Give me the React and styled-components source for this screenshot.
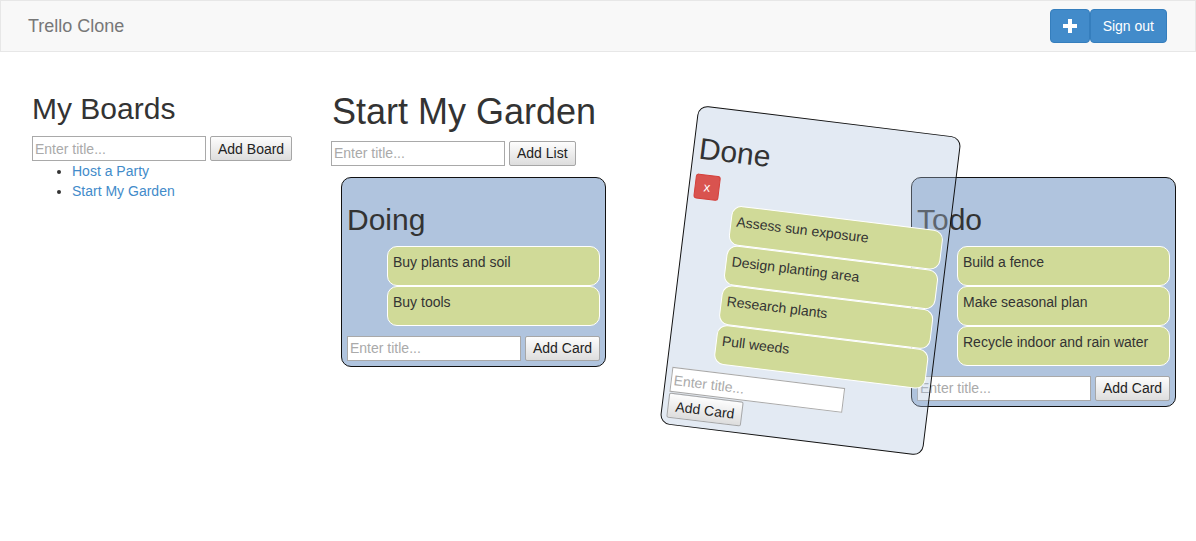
import React from "react";
import styled, { createGlobalStyle } from "styled-components";

/* ================= GLOBAL ================= */

const GlobalStyle = createGlobalStyle`
  body {
    margin: 0;
    background: #fff;
    color: #333;
    font-family: "Liberation Sans", Arial, Helvetica, sans-serif;
    font-size: 14px;
    line-height: 1.42857;
  }
  #root { min-height: 100vh; }
  * { box-sizing: border-box; }
`;

/* ================= NAVBAR ================= */

const Navbar = styled.nav`
  height: 52px;
  display: flex;
  align-items: center;
  justify-content: space-between;
  padding: 0 28px 0 27px;
  background: #f8f8f8;
  border: 1px solid #e7e7e7;
`;

const Brand = styled.a`
  font-size: 18px;
  line-height: 20px;
  color: #777;
  text-decoration: none;
`;

const NavActions = styled.div`
  display: flex;
`;

const PrimaryBtn = styled.button`
  height: 34px;
  display: flex;
  align-items: center;
  justify-content: center;
  padding: 0 12px;
  background: #428bca;
  border: 1px solid #357ebd;
  border-radius: 4px;
  color: #fff;
  font-family: inherit;
  font-size: 14px;
  cursor: pointer;
`;

/* ================= LAYOUT ================= */

const Main = styled.div`
  display: flex;
  padding: 18px 0 0 32px;
`;

const Sidebar = styled.aside`
  width: 300px;
  flex-shrink: 0;
`;

const BoardArea = styled.section`
  flex: 1;
`;

const Heading = styled.h2`
  margin: 22px 0 0;
  font-size: ${({ $big }) => ($big ? "36px" : "30px")};
  font-weight: 500;
  line-height: 1.1;
  color: #333;
`;

/* ================= FORMS ================= */

const InlineForm = styled.form`
  display: flex;
  flex-direction: ${({ $stacked }) => ($stacked ? "column" : "row")};
  align-items: flex-start;
  gap: ${({ $stacked }) => ($stacked ? "1px" : "4px")};
  margin: ${({ $top }) => $top || "0"} 0 0 ${({ $left }) => $left || "0"};
`;

const TitleInput = styled.input`
  width: 174px;
  height: 25px;
  padding: 0 2px;
  border: 1px solid #a9a9a9;
  background: #fff;
  font-family: inherit;
  font-size: 14px;
  color: #333;

  &::placeholder {
    color: #aaa;
  }
`;

const PlainBtn = styled.button`
  height: 25px;
  padding: 0 7px;
  border: 1px solid #a6a6a6;
  border-radius: 2px;
  background: linear-gradient(#fdfdfd, #dddddd);
  font-family: inherit;
  font-size: 14px;
  color: #222;
  white-space: nowrap;
`;

/* ================= BOARDS LIST ================= */

const BoardLinks = styled.ul`
  margin: 0;
  padding-left: 40px;
  line-height: 20px;
`;

const BoardLink = styled.a`
  color: #428bca;
  text-decoration: none;
`;

/* ================= LISTS ================= */

const ListsRow = styled.div`
  display: flex;
  align-items: flex-start;
  gap: 20px;
  margin: 11px 0 0 9px;
`;

const ListBox = styled.div`
  width: 265px;
  padding: 5px;
  border: 1px solid #111;
  border-radius: 10px;
  background: ${({ $dragging }) =>
    $dragging ? "rgba(176, 196, 222, 0.35)" : "#b0c4de"};
`;

/* slot left behind by the list being dragged */
const DragSlot = styled.div`
  position: relative;
  width: 265px;
  min-height: 300px;
  flex-shrink: 0;
`;

const DraggedList = styled(ListBox)`
  position: absolute;
  left: 52px;
  top: -57px;
  height: 321px;
  transform: rotate(7deg);
  z-index: 10;
`;

const ListTitle = styled.h2`
  margin: 20px 0 10px;
  font-size: 30px;
  font-weight: 500;
  line-height: 1.1;
  color: #333;
`;

const DeleteBtn = styled.button`
  display: block;
  width: 25px;
  height: 25px;
  margin: -1px 0 2px 0;
  padding: 0;
  background: #d9534f;
  border: 1px solid #d43f3a;
  border-radius: 3px;
  color: #fff;
  font-family: inherit;
  font-size: 13px;
`;

const CardList = styled.ul`
  margin: 0;
  padding-left: 40px;
  list-style: none;
`;

const Card = styled.li`
  height: 40px;
  padding: 5px;
  border: 1px solid #fff;
  border-radius: 10px;
  background: #d0da98;
  line-height: 20px;
  color: #333;
`;

/* ================= DATA ================= */

const lists = [
  { id: "doing", title: "Doing", cards: ["Buy plants and soil", "Buy tools"] },
  {
    id: "done",
    title: "Done",
    dragging: true,
    cards: [
      "Assess sun exposure",
      "Design planting area",
      "Research plants",
      "Pull weeds",
    ],
  },
  {
    id: "todo",
    title: "Todo",
    cards: ["Build a fence", "Make seasonal plan", "Recycle indoor and rain water"],
  },
];

/* ================= COMPONENTS ================= */

function ListContent({ list }) {
  return (
    <>
      <ListTitle>{list.title}</ListTitle>
      {list.dragging && <DeleteBtn>x</DeleteBtn>}
      <CardList>
        {list.cards.map((c) => (
          <Card key={c}>{c}</Card>
        ))}
      </CardList>
      <InlineForm $top={list.dragging ? "8px" : "10px"} $stacked={list.dragging}>
        <TitleInput placeholder="Enter title..." />
        <PlainBtn type="button">Add Card</PlainBtn>
      </InlineForm>
    </>
  );
}

const PlusIcon = () => (
  <svg width="14" height="14" viewBox="0 0 14 14">
    <path d="M5 0h4v5h5v4H9v5H5V9H0V5h5z" fill="#fff" />
  </svg>
);

export default function App() {
  return (
    <>
      <GlobalStyle />
      <Navbar>
        <Brand href="#">Trello Clone</Brand>
        <NavActions>
          <PrimaryBtn>
            <PlusIcon />
          </PrimaryBtn>
          <PrimaryBtn>Sign out</PrimaryBtn>
        </NavActions>
      </Navbar>

      <Main>
        <Sidebar>
          <Heading>My Boards</Heading>
          <InlineForm $top="11px">
            <TitleInput placeholder="Enter title..." />
            <PlainBtn type="button">Add Board</PlainBtn>
          </InlineForm>
          <BoardLinks>
            <li>
              <BoardLink href="#">Host a Party</BoardLink>
            </li>
            <li>
              <BoardLink href="#">Start My Garden</BoardLink>
            </li>
          </BoardLinks>
        </Sidebar>

        <BoardArea>
          <Heading $big>Start My Garden</Heading>
          <InlineForm $top="9px" $left="-1px">
            <TitleInput placeholder="Enter title..." />
            <PlainBtn type="button">Add List</PlainBtn>
          </InlineForm>
          <ListsRow>
            {lists.map((list) =>
              list.dragging ? (
                <DragSlot key={list.id}>
                  <DraggedList $dragging>
                    <ListContent list={list} />
                  </DraggedList>
                </DragSlot>
              ) : (
                <ListBox key={list.id}>
                  <ListContent list={list} />
                </ListBox>
              )
            )}
          </ListsRow>
        </BoardArea>
      </Main>
    </>
  );
}
